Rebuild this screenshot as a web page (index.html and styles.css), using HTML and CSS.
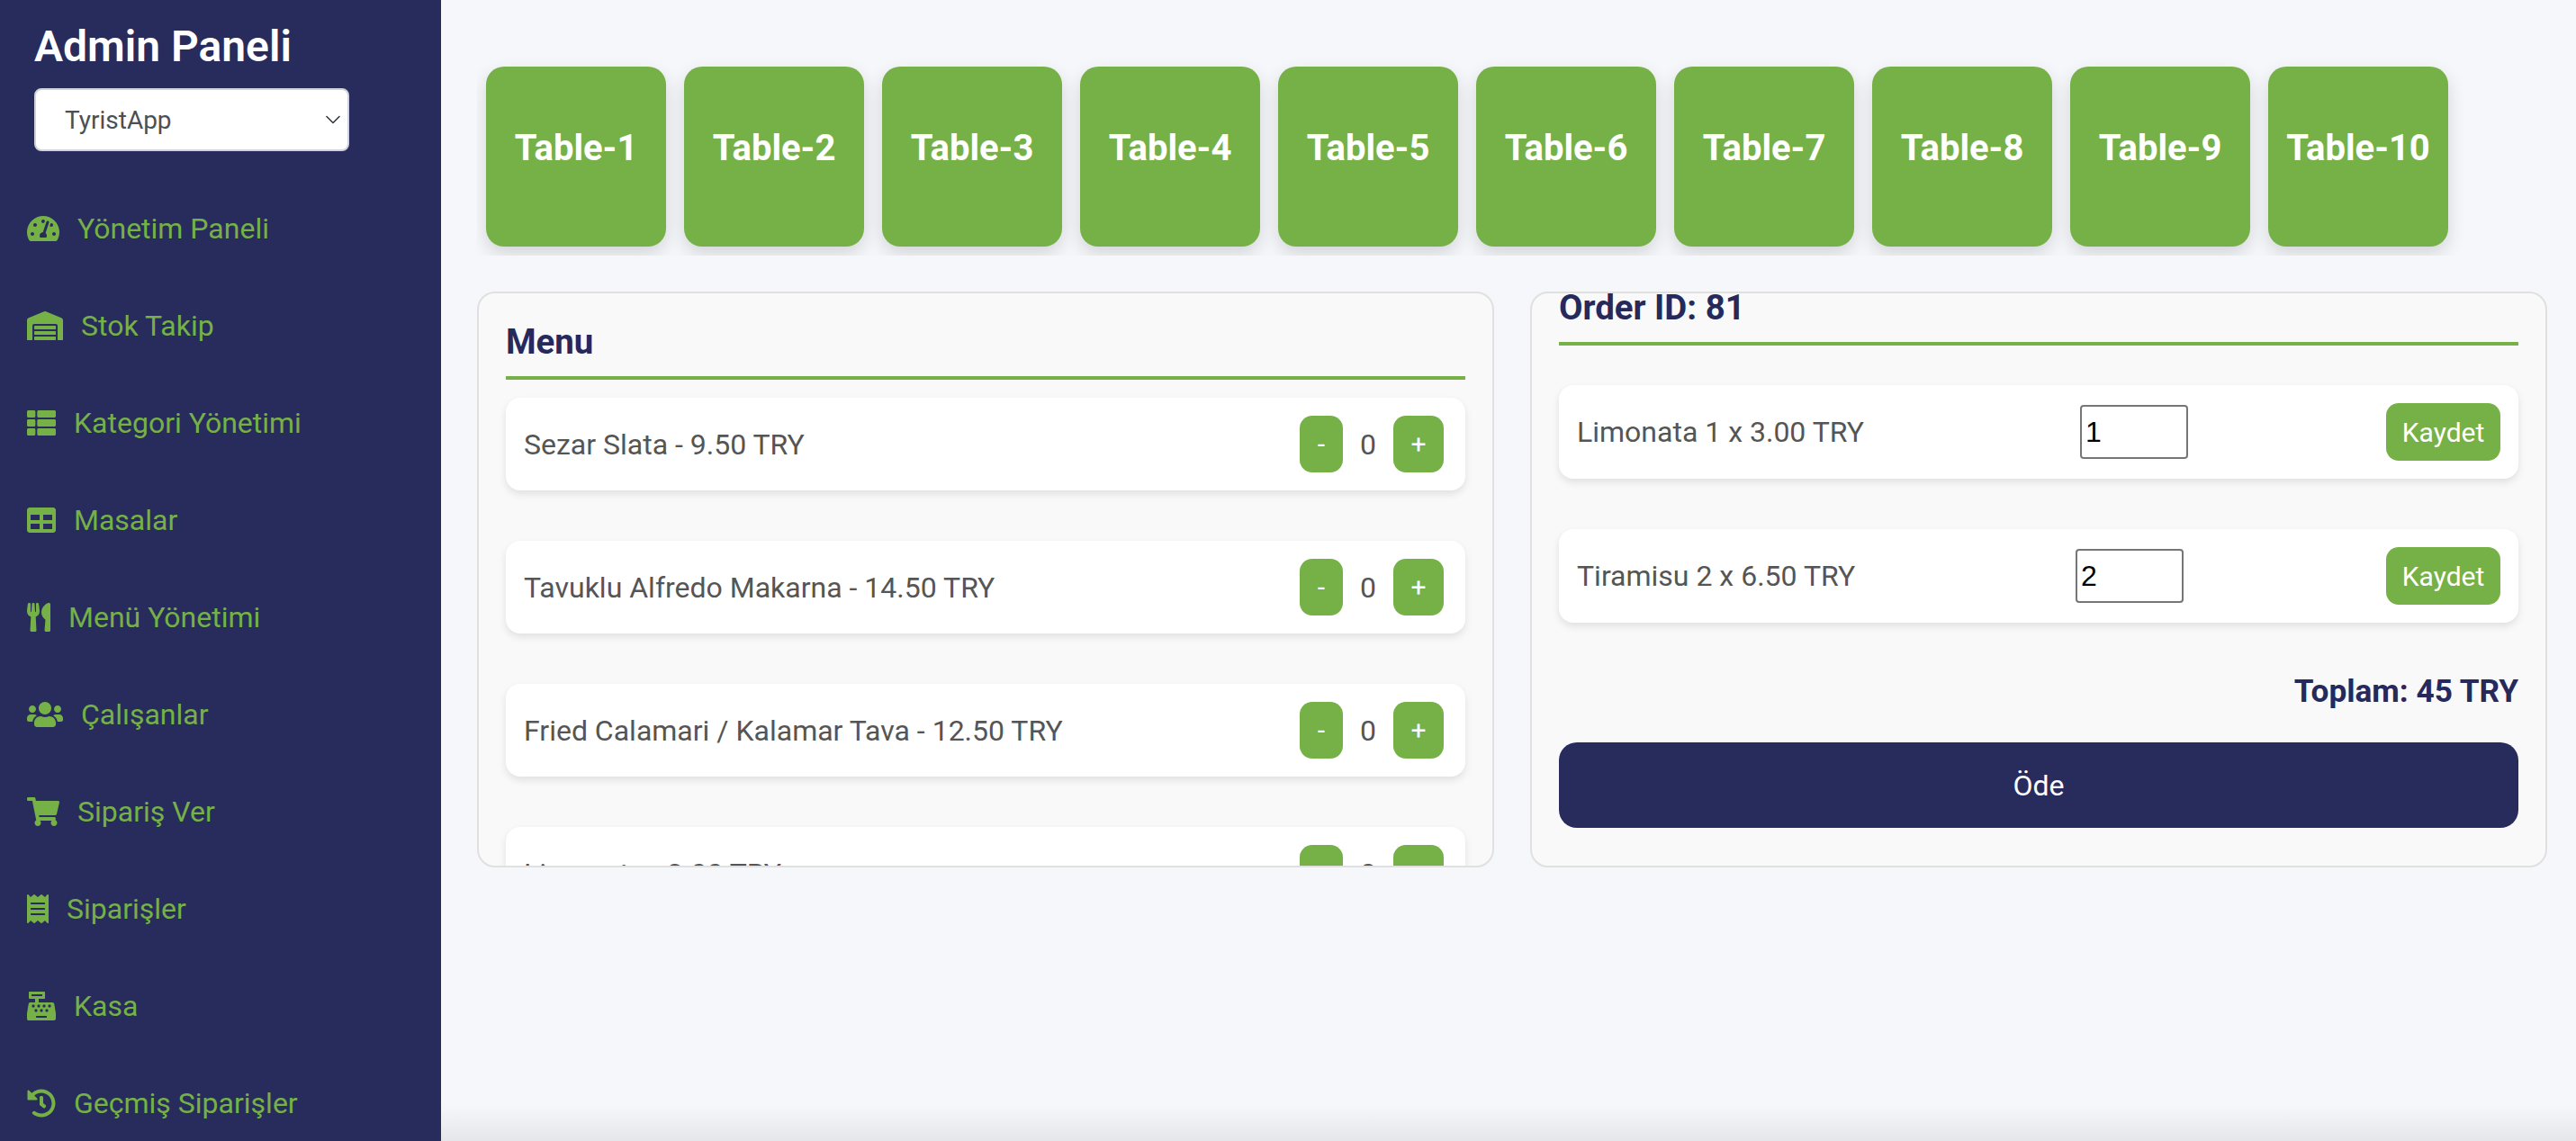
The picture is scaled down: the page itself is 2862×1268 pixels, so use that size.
FILE: index.html
```html
<!DOCTYPE html>
<html lang="tr">
<head>
  <meta charset="UTF-8">
  <meta name="viewport" content="width=device-width, initial-scale=1.0">
  <title>Admin Paneli</title>
  <link rel="stylesheet" href="styles.css">
</head>
<body>
  <!-- SOL MENU -->
  <aside class="sidebar">
    <h1 class="sidebar-baslik">Admin Paneli</h1>
    <div class="sube-secim">
      <select class="sube-select">
        <option>TyristApp</option>
      </select>
      <svg class="sube-ok" viewBox="0 0 16 10"><path d="M1 1.5l7 7 7-7" fill="none" stroke="#343a40" stroke-width="1.6" stroke-linecap="round" stroke-linejoin="round"/></svg>
    </div>

    <nav class="nav-liste">
      <a class="nav-link" href="#">
        <svg class="nav-ikon" width="36" height="32" viewBox="0 0 576 512"><path d="M288 32C128.94 32 0 160.94 0 320c0 52.8 14.25 102.26 39.06 144.8 5.61 9.62 16.3 15.2 27.44 15.2h443c11.14 0 21.83-5.58 27.44-15.2C561.75 422.26 576 372.8 576 320c0-159.06-128.94-288-288-288zm0 64c14.71 0 26.58 10.13 30.32 23.65-1.11 2.26-2.64 4.23-3.45 6.67l-9.22 27.67c-5.13 3.49-10.97 6.01-17.64 6.01-17.67 0-32-14.33-32-32S270.33 96 288 96zM96 384c-17.67 0-32-14.33-32-32s14.33-32 32-32 32 14.33 32 32-14.33 32-32 32zm48-160c-17.67 0-32-14.33-32-32s14.33-32 32-32 32 14.33 32 32-14.33 32-32 32zm246.77-72.41l-61.33 184C343.13 347.33 352 364.54 352 384c0 11.72-3.38 22.55-8.88 32H232.88c-5.5-9.45-8.88-20.28-8.88-32 0-33.94 26.5-61.43 59.9-63.59l61.34-184.01c4.17-12.56 17.73-19.45 30.36-15.17 12.57 4.19 19.35 17.79 15.17 30.36zm14.66 57.2l15.52-46.55c3.47-1.29 7.13-2.23 11.05-2.23 17.67 0 32 14.33 32 32s-14.33 32-32 32c-11.38-.01-20.89-6.28-26.57-15.22zM480 384c-17.67 0-32-14.33-32-32s14.33-32 32-32 32 14.33 32 32-14.33 32-32 32z"/></svg>
        Yönetim Paneli
      </a>
      <a class="nav-link" href="#">
        <svg class="nav-ikon" width="40" height="32" viewBox="0 0 640 512"><path d="M504 352H136.4c-4.4 0-8 3.6-8 8l-.1 48c0 4.4 3.6 8 8 8H504c4.4 0 8-3.6 8-8v-48c0-4.4-3.6-8-8-8zm0 96H136.1c-4.4 0-8 3.6-8 8l-.1 48c0 4.4 3.6 8 8 8h368c4.4 0 8-3.6 8-8v-48c0-4.4-3.6-8-8-8zm0-192H136.6c-4.4 0-8 3.6-8 8l-.1 48c0 4.4 3.6 8 8 8H504c4.4 0 8-3.6 8-8v-48c0-4.4-3.6-8-8-8zm106.5-139L338.4 3.7a48.15 48.15 0 0 0-36.9 0L29.5 117C11.7 124.5 0 141.9 0 161.3V504c0 4.4 3.6 8 8 8h80c4.4 0 8-3.6 8-8V256c0-17.6 14.6-32 32.6-32h382.8c18 0 32.6 14.4 32.6 32v248c0 4.4 3.6 8 8 8h80c4.4 0 8-3.6 8-8V161.3c0-19.4-11.7-36.8-29.5-44.3z"/></svg>
        Stok Takip
      </a>
      <a class="nav-link" href="#">
        <svg class="nav-ikon" width="32" height="32" viewBox="0 0 512 512"><path d="M149.333 216v80c0 13.255-10.745 24-24 24H24c-13.255 0-24-10.745-24-24v-80c0-13.255 10.745-24 24-24h101.333c13.255 0 24 10.745 24 24zM0 376v80c0 13.255 10.745 24 24 24h101.333c13.255 0 24-10.745 24-24v-80c0-13.255-10.745-24-24-24H24c-13.255 0-24 10.745-24 24zM125.333 32H24C10.745 32 0 42.745 0 56v80c0 13.255 10.745 24 24 24h101.333c13.255 0 24-10.745 24-24V56c0-13.255-10.745-24-24-24zm80 448H488c13.255 0 24-10.745 24-24v-80c0-13.255-10.745-24-24-24H205.333c-13.255 0-24 10.745-24 24v80c0 13.255 10.745 24 24 24zm-24-424v80c0 13.255 10.745 24 24 24H488c13.255 0 24-10.745 24-24V56c0-13.255-10.745-24-24-24H205.333c-13.255 0-24 10.745-24 24zm24 264H488c13.255 0 24-10.745 24-24v-80c0-13.255-10.745-24-24-24H205.333c-13.255 0-24 10.745-24 24v80c0 13.255 10.745 24 24 24z"/></svg>
        Kategori Yönetimi
      </a>
      <a class="nav-link" href="#">
        <svg class="nav-ikon" width="32" height="32" viewBox="0 0 512 512"><path d="M464 32H48C21.49 32 0 53.49 0 80v352c0 26.51 21.49 48 48 48h416c26.51 0 48-21.49 48-48V80c0-26.51-21.49-48-48-48zM224 416H64v-96h160v96zm0-160H64v-96h160v96zm224 160H288v-96h160v96zm0-160H288v-96h160v96z"/></svg>
        Masalar
      </a>
      <a class="nav-link" href="#">
        <svg class="nav-ikon" width="26" height="32" viewBox="0 0 416 512"><path d="M207.9 15.2c.8 4.7 16.1 94.5 16.1 128.8 0 52.3-27.8 89.6-68.9 104.6L168 486.7c.7 13.7-10.2 25.3-24 25.3H80c-13.7 0-24.7-11.5-24-25.3l12.9-238.1C27.7 233.6 0 196.2 0 144 0 109.6 15.3 19.9 16.1 15.2 19.3-5.1 61.4-5.4 64 16.3v141.2c1.3 3.4 15.1 3.2 16 0 1.4-25.3 7.9-139.2 8-141.8 3.3-20.8 44.7-20.8 47.9 0 .2 2.7 6.6 116.5 8 141.8.9 3.2 14.8 3.4 16 0V16.3c2.6-21.6 44.8-21.4 48-1.1zm119.2 285.7l-15 185.1c-1.2 14 9.9 26 23.9 26h56c13.3 0 24-10.7 24-24V24c0-13.2-10.7-24-24-24-82.5 0-221.4 178.5-64.9 300.9z"/></svg>
        Menü Yönetimi
      </a>
      <a class="nav-link" href="#">
        <svg class="nav-ikon" width="40" height="32" viewBox="0 0 640 512"><path d="M96 224c35.3 0 64-28.7 64-64s-28.7-64-64-64-64 28.7-64 64 28.7 64 64 64zm448 0c35.3 0 64-28.7 64-64s-28.7-64-64-64-64 28.7-64 64 28.7 64 64 64zm32 32h-64c-17.6 0-33.5 7.1-45.1 18.6 40.3 22.1 68.9 62 75.1 109.4h66c17.7 0 32-14.3 32-32v-32c0-35.3-28.7-64-64-64zm-256 0c61.9 0 112-50.1 112-112S381.9 32 320 32 208 82.1 208 144s50.1 112 112 112zm76.8 32h-8.3c-20.8 10-43.9 16-68.5 16s-47.6-6-68.5-16h-8.3C179.6 288 128 339.6 128 403.2V432c0 26.5 21.5 48 48 48h288c26.5 0 48-21.5 48-48v-28.8c0-63.6-51.6-115.2-115.2-115.2zm-223.7-13.4C161.5 263.1 145.6 256 128 256H64c-35.3 0-64 28.7-64 64v32c0 17.7 14.3 32 32 32h65.9c6.3-47.4 34.9-87.3 75.2-109.4z"/></svg>
        Çalışanlar
      </a>
      <a class="nav-link" href="#">
        <svg class="nav-ikon" width="36" height="32" viewBox="0 0 576 512"><path d="M528.12 301.319l47.273-208C578.806 78.301 567.391 64 551.99 64H159.208l-9.166-44.81C147.758 8.021 137.93 0 126.529 0H24C10.745 0 0 10.745 0 24v16c0 13.255 10.745 24 24 24h69.883l70.248 343.435C147.325 417.1 136 435.222 136 456c0 30.928 25.072 56 56 56s56-25.072 56-56c0-15.674-6.447-29.835-16.824-40h209.647C430.447 426.165 424 440.326 424 456c0 30.928 25.072 56 56 56s56-25.072 56-56c0-22.172-12.888-41.332-31.579-50.405l5.517-24.276c3.413-15.018-8.002-29.319-23.403-29.319H218.117l-6.545-32h293.145c11.206 0 20.92-7.754 23.403-18.681z"/></svg>
        Sipariş Ver
      </a>
      <a class="nav-link" href="#">
        <svg class="nav-ikon" width="24" height="32" viewBox="0 0 384 512"><path d="M358.4 3.2L320 48 265.6 3.2a15.9 15.9 0 0 0-19.2 0L192 48 137.6 3.2a15.9 15.9 0 0 0-19.2 0L64 48 25.6 3.2C15-4.7 0 2.8 0 16v480c0 13.2 15 20.7 25.6 12.8L64 464l54.4 44.8a15.9 15.9 0 0 0 19.2 0L192 464l54.4 44.8a15.9 15.9 0 0 0 19.2 0L320 464l38.4 44.8c10.5 7.9 25.6.4 25.6-12.8V16c0-13.2-15-20.7-25.6-12.8zM320 360c0 4.4-3.6 8-8 8H72c-4.4 0-8-3.6-8-8v-16c0-4.4 3.6-8 8-8h240c4.4 0 8 3.6 8 8v16zm0-96c0 4.4-3.6 8-8 8H72c-4.4 0-8-3.6-8-8v-16c0-4.4 3.6-8 8-8h240c4.4 0 8 3.6 8 8v16zm0-96c0 4.4-3.6 8-8 8H72c-4.4 0-8-3.6-8-8v-16c0-4.4 3.6-8 8-8h240c4.4 0 8 3.6 8 8v16z"/></svg>
        Siparişler
      </a>
      <a class="nav-link" href="#">
        <svg class="nav-ikon" width="32" height="32" viewBox="0 0 512 512"><path d="M511.1 378.8l-26.7-160c-2.6-15.4-15.9-26.7-31.6-26.7H208v-64h96c8.8 0 16-7.2 16-16V16c0-8.8-7.2-16-16-16H48c-8.8 0-16 7.2-16 16v96c0 8.8 7.2 16 16 16h96v64H59.1c-15.6 0-29 11.3-31.6 26.7L.8 378.7c-.6 3.5-.9 7-.9 10.5V480c0 17.7 14.3 32 32 32h448c17.7 0 32-14.3 32-32v-90.7c.1-3.5-.2-7-.8-10.5zM280 248c0-8.8 7.2-16 16-16h16c8.8 0 16 7.2 16 16v16c0 8.8-7.2 16-16 16h-16c-8.8 0-16-7.2-16-16v-16zm-32 64h16c8.8 0 16 7.2 16 16v16c0 8.8-7.2 16-16 16h-16c-8.8 0-16-7.2-16-16v-16c0-8.8 7.2-16 16-16zm-32-80c8.8 0 16 7.2 16 16v16c0 8.8-7.2 16-16 16h-16c-8.8 0-16-7.2-16-16v-16c0-8.8 7.2-16 16-16h16zM80 80V48h192v32H80zm40 200h-16c-8.8 0-16-7.2-16-16v-16c0-8.8 7.2-16 16-16h16c8.8 0 16 7.2 16 16v16c0 8.8-7.2 16-16 16zm16 64v-16c0-8.8 7.2-16 16-16h16c8.8 0 16 7.2 16 16v16c0 8.8-7.2 16-16 16h-16c-8.8 0-16-7.2-16-16zm216 112c0 4.4-3.6 8-8 8H168c-4.4 0-8-3.6-8-8v-16c0-4.4 3.6-8 8-8h176c4.4 0 8 3.6 8 8v16zm24-112c0 8.8-7.2 16-16 16h-16c-8.8 0-16-7.2-16-16v-16c0-8.8 7.2-16 16-16h16c8.8 0 16 7.2 16 16v16zm48-80c0 8.8-7.2 16-16 16h-16c-8.8 0-16-7.2-16-16v-16c0-8.8 7.2-16 16-16h16c8.8 0 16 7.2 16 16v16z"/></svg>
        Kasa
      </a>
      <a class="nav-link" href="#">
        <svg class="nav-ikon" width="32" height="32" viewBox="0 0 512 512"><path d="M504 255.531c.253 136.64-111.18 248.372-247.82 248.468-59.015.042-113.223-20.53-155.822-54.911-11.077-8.94-11.905-25.541-1.839-35.607l11.267-11.267c8.609-8.609 22.353-9.551 31.891-1.984C173.062 425.135 212.781 440 256 440c101.705 0 184-82.311 184-184 0-101.705-82.311-184-184-184-48.814 0-93.149 18.969-126.068 49.932l50.754 50.754c10.08 10.08 2.941 27.314-11.313 27.314H24c-8.837 0-16-7.163-16-16V38.627c0-14.254 17.234-21.393 27.314-11.314l49.372 49.372C129.209 34.136 189.552 8 256 8c136.81 0 247.747 110.78 248 247.531zm-180.912 78.784l9.823-12.63c8.138-10.463 6.253-25.542-4.21-33.679L288 256.349V152c0-13.255-10.745-24-24-24h-16c-13.255 0-24 10.745-24 24v135.651l65.409 50.874c10.463 8.137 25.541 6.253 33.679-4.21z"/></svg>
        Geçmiş Siparişler
      </a>
    </nav>
  </aside>

  <main class="icerik">
    <!-- MASALAR -->
    <div class="masa-satir">
      <button class="masa">Table-1</button>
      <button class="masa">Table-2</button>
      <button class="masa">Table-3</button>
      <button class="masa">Table-4</button>
      <button class="masa">Table-5</button>
      <button class="masa">Table-6</button>
      <button class="masa">Table-7</button>
      <button class="masa">Table-8</button>
      <button class="masa">Table-9</button>
      <button class="masa">Table-10</button>
    </div>

    <div class="panel-satir">
      <!-- MENU -->
      <section class="panel">
        <h2 class="panel-baslik">Menu</h2>
        <div class="kalem">
          <span>Sezar Slata - 9.50 TRY</span>
          <div class="adet">
            <button class="btn-yesil btn-eksi">-</button>
            <span>0</span>
            <button class="btn-yesil btn-arti">+</button>
          </div>
        </div>
        <div class="kalem">
          <span>Tavuklu Alfredo Makarna - 14.50 TRY</span>
          <div class="adet">
            <button class="btn-yesil btn-eksi">-</button>
            <span>0</span>
            <button class="btn-yesil btn-arti">+</button>
          </div>
        </div>
        <div class="kalem">
          <span>Fried Calamari / Kalamar Tava - 12.50 TRY</span>
          <div class="adet">
            <button class="btn-yesil btn-eksi">-</button>
            <span>0</span>
            <button class="btn-yesil btn-arti">+</button>
          </div>
        </div>
        <div class="kalem">
          <span>Limonata - 3.00 TRY</span>
          <div class="adet">
            <button class="btn-yesil btn-eksi">-</button>
            <span>0</span>
            <button class="btn-yesil btn-arti">+</button>
          </div>
        </div>
      </section>

      <!-- SIPARIS -->
      <section class="panel panel-siparis">
        <h2 class="panel-baslik">Order ID: 81</h2>
        <div class="siparis-liste">
          <div class="kalem kalem-siparis">
            <span>Limonata 1 x 3.00 TRY</span>
            <input class="adet-input" type="text" value="1">
            <button class="btn-yesil btn-kaydet">Kaydet</button>
          </div>
          <div class="kalem kalem-siparis">
            <span>Tiramisu 2 x 6.50 TRY</span>
            <input class="adet-input" type="text" value="2">
            <button class="btn-yesil btn-kaydet">Kaydet</button>
          </div>
        </div>
        <div class="toplam">Toplam: 45 TRY</div>
        <button class="btn-ode">Öde</button>
      </section>
    </div>
  </main>
</body>
</html>
```

FILE: styles.css
```css
* {
  box-sizing: border-box;
}

body {
  margin: 0;
  height: 1268px;
  display: flex;
  overflow: hidden;
  font-family: Roboto, "Liberation Sans", sans-serif;
  background-color: #f5f7fb;
  color: #555;
}

button {
  font-family: inherit;
  border: none;
  cursor: pointer;
}

/* Sol menu */
.sidebar {
  width: 490px;
  flex-shrink: 0;
  height: 100%;
  overflow: hidden;
  background-color: #282c5c;
  padding: 24px 30px 0;
}

.sidebar-baslik {
  margin: 0 0 0 8px;
  font-size: 48px;
  line-height: 56px;
  font-weight: 600;
  color: #fff;
}

.sube-secim {
  position: relative;
  width: 350px;
  margin: 18px 0 0 8px;
}

.sube-select {
  appearance: none;
  display: block;
  width: 100%;
  height: 70px;
  padding: 0 32px;
  font-family: inherit;
  font-size: 28px;
  color: #495057;
  background-color: #fff;
  border: 2px solid #ced4da;
  border-radius: 8px;
}

.sube-ok {
  position: absolute;
  top: 30px;
  right: 10px;
  width: 16px;
  height: 10px;
}

.nav-liste {
  margin-top: 32px;
}

.nav-link {
  display: flex;
  align-items: center;
  height: 108px;
  font-size: 32px;
  color: #76b147;
  text-decoration: none;
}

.nav-ikon {
  flex-shrink: 0;
  margin-right: 20px;
  fill: #76b147;
}

/* Icerik */
.icerik {
  flex: 1;
  min-width: 0;
  height: 100%;
  padding: 64px 32px 0 40px;
  background: linear-gradient(to top, #e5e6ea, #f5f7fb 40px);
}

.masa-satir {
  display: flex;
  gap: 20px;
  padding: 10px;
  overflow: hidden;
}

.masa {
  width: 200px;
  height: 200px;
  flex-shrink: 0;
  padding: 0 0 20px;
  background-color: #76b147;
  color: #fff;
  font-size: 40px;
  font-weight: 700;
  border-radius: 20px;
  box-shadow: 0 8px 20px rgba(0, 0, 0, 0.14);
}

.panel-satir {
  display: flex;
  gap: 40px;
  margin-top: 40px;
}

.panel {
  flex: 1;
  min-width: 0;
  height: 640px;
  padding: 30px;
  overflow: hidden;
  background-color: #f9f9f9;
  border: 2px solid #e0e0e0;
  border-radius: 20px;
}

.panel-baslik {
  margin: 0 0 20px;
  padding-bottom: 14px;
  font-size: 38.4px;
  line-height: 48px;
  font-weight: 700;
  color: #25295c;
  border-bottom: 4px solid #76b147;
}

.panel-siparis .panel-baslik {
  margin-top: -38px;
}

.kalem {
  display: flex;
  justify-content: space-between;
  align-items: center;
  min-height: 103px;
  margin-bottom: 56px;
  padding: 20px;
  font-size: 32px;
  background-color: #fff;
  border-radius: 16px;
  box-shadow: 0 4px 8px rgba(0, 0, 0, 0.1);
}

.adet {
  display: flex;
  align-items: center;
  gap: 19px;
  margin-right: 4px;
}

.btn-yesil {
  height: 63px;
  background-color: #76b147;
  color: #fff;
  font-size: 30px;
  font-weight: 400;
  border-radius: 14px;
}

.btn-eksi {
  width: 48px;
}

.btn-arti {
  width: 56px;
}

.siparis-liste {
  margin-top: 44px;
}

.adet-input {
  width: 120px;
  height: 60px;
  margin-left: 20px;
  padding: 2px 4px;
  font-family: "Liberation Sans", sans-serif;
  font-size: 32px;
  color: #000;
  background-color: #fff;
  border: 2px solid #767676;
  border-radius: 4px;
}

.btn-kaydet {
  width: 127px;
  height: 64px;
}

.toplam {
  margin-top: 11px;
  font-size: 35.2px;
  line-height: 40px;
  font-weight: 700;
  text-align: right;
  color: #25295c;
}

.btn-ode {
  display: block;
  width: 100%;
  height: 95px;
  margin-top: 37px;
  background-color: #282c5c;
  color: #fff;
  font-size: 32px;
  font-weight: 400;
  border-radius: 20px;
}
```
